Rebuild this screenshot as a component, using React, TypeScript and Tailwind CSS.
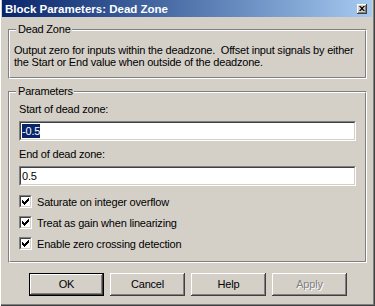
const raised =
  "bg-[#D4D0C8] shadow-[inset_-1px_-1px_0_#404040,inset_1px_1px_0_#ffffff,inset_-2px_-2px_0_#808080]";

function GroupBox({ label, className, children }: { label: string; className: string; children: React.ReactNode }) {
  return (
    <div className={"relative border border-t-[#808080] border-l-[#808080] border-b-white border-r-white " + className}>
      <div className="h-full border border-t-white border-l-white border-b-[#808080] border-r-[#808080]">
        {children}
      </div>
      <span className="absolute left-[7px] top-[-7px] bg-[#D4D0C8] pl-[2px] pr-[1px] leading-[12px]">{label}</span>
    </div>
  );
}

function TextField({ value, selected }: { value: string; selected?: boolean }) {
  return (
    <div className="h-[20px] w-full border border-t-[#808080] border-l-[#808080] border-b-white border-r-white">
      <div className="flex h-full items-center border border-t-[#404040] border-l-[#404040] border-b-[#D4D0C8] border-r-[#D4D0C8] bg-white pl-[1px]">
        <span className={selected ? "bg-[#0A246A] text-white leading-[14px]" : "leading-[14px]"}>{value}</span>
      </div>
    </div>
  );
}

function CheckRow({ label }: { label: string }) {
  return (
    <div className="flex h-[21px] items-center gap-[5px]">
      <div className="h-[13px] w-[13px] border border-t-[#808080] border-l-[#808080] border-b-white border-r-white">
        <div className="flex h-full w-full items-center justify-center border border-t-[#404040] border-l-[#404040] border-b-[#D4D0C8] border-r-[#D4D0C8] bg-white">
          <svg width="7" height="7" viewBox="0 0 7 7">
            <path d="M0 2h1v1h1v1h1v-1h1v-1h1v-1h1v-1h1v3h-1v1h-1v1h-1v1h-1v1h-1v-1h-1v-1h-1v-1h-1z" fill="#000" />
          </svg>
        </div>
      </div>
      <span className="leading-[12px]">{label}</span>
    </div>
  );
}

function Button({ label, isDefault, disabled }: { label: string; isDefault?: boolean; disabled?: boolean }) {
  return (
    <div className={"h-[23px] w-[75px] " + (isDefault ? "border border-black" : "")}>
      <div className={"flex h-full w-full items-center justify-center " + raised}>
        <span className={disabled ? "text-[#808080] [text-shadow:1px_1px_0_#ffffff]" : ""}>{label}</span>
      </div>
    </div>
  );
}

export default function App() {
  return (
    <div
      className="flex h-[306px] w-[375px] flex-col bg-[#D4D0C8] text-[11px] tracking-[-0.2px] text-black shadow-[inset_1px_0_0_#ffffff,inset_-1px_-1px_0_#404040,inset_-2px_-2px_0_#808080]"
      style={{ fontFamily: '"Liberation Sans", Arial, sans-serif' }}
    >
      {/* Title bar */}
      <div className="ml-[2px] mr-[3px] flex h-[17px] items-center justify-between bg-gradient-to-r from-[#0A246A] to-[#A6CAF0] pl-[3px] pr-[5px]">
        <span className="text-[11.5px] font-bold leading-[14px] tracking-[0px] text-white">Block Parameters: Dead Zone</span>
        <div className={"flex h-[10px] w-[10px] items-center justify-center " + raised}>
          <svg width="6" height="5" viewBox="0 0 6 5">
            <path d="M0 0h1.5l1.5 1.5 1.5-1.5h1.5l-2.2 2.5 2.2 2.5h-1.5l-1.5-1.5-1.5 1.5h-1.5l2.2-2.5z" fill="#000" />
          </svg>
        </div>
      </div>

      <div className="flex flex-col px-[8px]">
        <GroupBox label="Dead Zone" className="mt-[12px] h-[50px]">
          <div className="whitespace-nowrap pl-[4px] pt-[13px] leading-[12px]">
            <div>Output zero for inputs within the deadzone.&nbsp; Offset input signals by either</div>
            <div>the Start or End value when outside of the deadzone.</div>
          </div>
        </GroupBox>

        <GroupBox label="Parameters" className="mt-[12px] h-[172px]">
          <div className="flex flex-col pl-[9px] pr-[9px] pt-[10px]">
            <div className="leading-[12px]">Start of dead zone:</div>
            <div className="mt-[6px]">
              <TextField value="-0.5" selected />
            </div>
            <div className="mt-[7px] leading-[12px]">End of dead zone:</div>
            <div className="mt-[6px]">
              <TextField value="0.5" />
            </div>
            <div className="mt-[5px] flex flex-col">
              <CheckRow label="Saturate on integer overflow" />
              <CheckRow label="Treat as gain when linearizing" />
              <CheckRow label="Enable zero crossing detection" />
            </div>
          </div>
        </GroupBox>

        <div className="ml-[21px] mt-[10px] flex gap-[6px]">
          <Button label="OK" isDefault />
          <Button label="Cancel" />
          <Button label="Help" />
          <Button label="Apply" disabled />
        </div>
      </div>
    </div>
  );
}
